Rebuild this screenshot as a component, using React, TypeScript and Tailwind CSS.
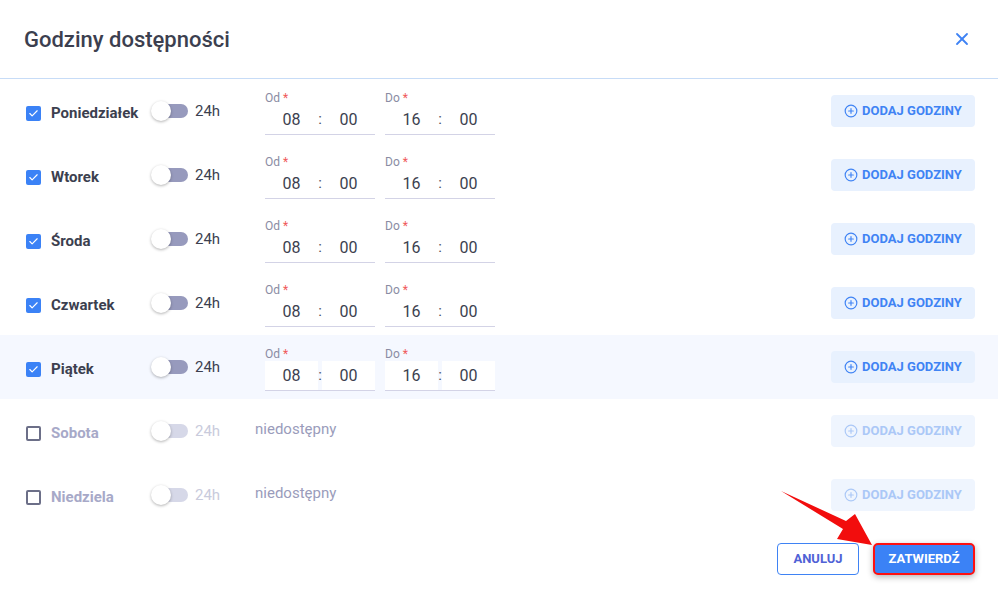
import { Check, X, CirclePlus } from "lucide-react"

interface Day {
    name: string
    enabled: boolean
    highlight?: boolean
}

const days: Day[] = [
    { name: "Poniedziałek", enabled: true },
    { name: "Wtorek", enabled: true },
    { name: "Środa", enabled: true },
    { name: "Czwartek", enabled: true },
    { name: "Piątek", enabled: true, highlight: true },
    { name: "Sobota", enabled: false },
    { name: "Niedziela", enabled: false },
]

function TimeField({ label, hour, minute, filled }: { label: string; hour: string; minute: string; filled?: boolean }) {
    const box = filled
        ? "w-[53px] h-[30px] flex items-center justify-center bg-white border-b border-[#d3d3e6]"
        : "w-[53px] h-[30px] flex items-center justify-center border-b border-[#d3d3e6]"
    return (
        <div className="flex flex-col">
            <div className="text-[12px] leading-[14px] text-[#8a8ca3]">
                {label} <span className="text-[#f05a5a]">*</span>
            </div>
            <div className="flex items-center text-[16px] text-[#3c3f4f]">
                <div className={box}>{hour}</div>
                <div className="w-[4px] h-[30px] flex items-center justify-center text-[15px] text-[#4a4d5e] border-b border-[#d3d3e6]">:</div>
                <div className={box}>{minute}</div>
            </div>
        </div>
    )
}

function DayRow({ day }: { day: Day }) {
    const on = day.enabled
    return (
        <div className={`flex items-center h-16 pl-[26px] pr-[23px] ${day.highlight ? "bg-[#f5f8ff]" : ""}`}>
            <div className="flex items-center mt-[4px] w-[125px]">
                {on ? (
                    <div className="w-[15px] h-[15px] rounded-[2px] bg-[#3b82f6] flex items-center justify-center">
                        <Check size={11} strokeWidth={2.5} className="text-white" />
                    </div>
                ) : (
                    <div className="w-[15px] h-[15px] rounded-[2px] border-2 border-[#6c6f88] bg-white" />
                )}
                <span className={`ml-[10px] text-[15px] font-bold ${on ? "text-[#3c3f4f]" : "text-[#a7a9c8]"}`}>{day.name}</span>
            </div>
            <div className="flex items-center w-[104px]">
                <div className="relative w-[37px] h-[20px] flex items-center">
                    <div className={`ml-[1px] w-[36px] h-[14px] rounded-full ${on ? "bg-[#979abd]" : "bg-[#d6d8e8]"}`} />
                    <div className="absolute left-0 top-0 w-[20px] h-[20px] rounded-full bg-white shadow-[0_1px_3px_rgba(0,0,0,0.3)]" />
                </div>
                <span className={`ml-[7px] text-[15px] ${on ? "text-[#3c3f4f]" : "text-[#c9cbdc]"}`}>24h</span>
            </div>
            {on ? (
                <div className="flex items-center gap-[10px] ml-[10px] mt-[4px]">
                    <TimeField label="Od" hour="08" minute="00" filled={day.highlight} />
                    <TimeField label="Do" hour="16" minute="00" filled={day.highlight} />
                </div>
            ) : (
                <span className="text-[15px] text-[#9a9cbb] -mt-[4px]">niedostępny</span>
            )}
            <div className="ml-auto">
                <button
                    type="button"
                    className={`w-[144px] h-[32px] rounded-[4px] flex items-center justify-center gap-[4px] text-[13px] font-bold ${on ? "bg-[#e8f1fe] text-[#3f83f4]" : "bg-[#eff5fe] text-[#abc8f7]"}`}
                >
                    <CirclePlus size={14} strokeWidth={2} />
                    DODAJ GODZINY
                </button>
            </div>
        </div>
    )
}

export default function App() {
    return (
        <div className="relative w-[998px] h-[598px] bg-white overflow-hidden" style={{ fontFamily: "Roboto, 'Liberation Sans', sans-serif" }}>
            <div className="flex items-center justify-between h-[79px] pl-6 pr-[26px] border-b border-[#c7dcf7]">
                <h1 className="text-[22px] font-medium text-[#3c3f4f]">Godziny dostępności</h1>
                <X size={20} strokeWidth={2.2} className="text-[#3f83f4]" />
            </div>
            <div className="flex flex-col">
                {days.map((day) => (
                    <DayRow key={day.name} day={day} />
                ))}
            </div>
            <div className="flex justify-end gap-[14px] pr-[23px] mt-4">
                <button type="button" className="w-[82px] h-[32px] rounded-[4px] border border-[#3f83f4] bg-white text-[13px] font-bold text-[#5062d6]">
                    ANULUJ
                </button>
                <button type="button" className="w-[102px] h-[32px] rounded-[5px] border-2 border-[#ff1010] bg-[#3b82f6] text-[13px] font-bold text-white shadow-[0_2px_6px_rgba(0,0,0,0.3)]">
                    ZATWIERDŹ
                </button>
            </div>
            <svg className="absolute left-0 top-0 pointer-events-none" width="998" height="598" viewBox="0 0 998 598">
                <polygon points="781,491 846,521 855,514 872,545 837,539 843,529" fill="#f20d0d" />
            </svg>
        </div>
    )
}
